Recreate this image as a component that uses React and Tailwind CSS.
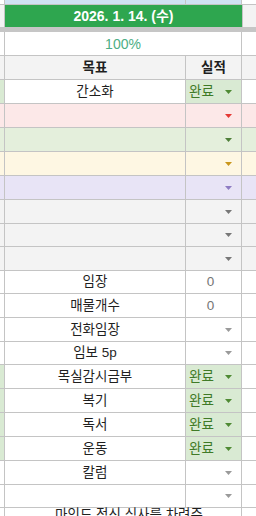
import React from 'react'

const LINE = '#c4c4c4'
const DONE_BG = '#d9ead3'
const GRAY = '#f3f3f3'

function Arrow({ color }) {
  return (
    <svg width="7" height="4" viewBox="0 0 7 4" className="flex-shrink-0">
      <path d="M0 0h7L3.5 4z" fill={color} />
    </svg>
  )
}

const rows = [
  { h: 24, a: DONE_BG, b: '#ffffff', c: DONE_BG, d: '#ffffff', label: '간소화', done: true, arrow: '#4f8a34' },
  { h: 24, all: '#fce8e8', arrow: '#e53935' },
  { h: 24, all: '#e4efdc', arrow: '#4f7f3a' },
  { h: 24, all: '#fef7e3', arrow: '#c9961c' },
  { h: 24, all: '#e8e4f6', arrow: '#8e7cc3' },
  { h: 24, all: GRAY, arrow: '#777777' },
  { h: 23, all: GRAY, arrow: '#777777' },
  { h: 24, all: GRAY, arrow: '#777777' },
  { h: 23, all: '#ffffff', label: '임장', value: '0' },
  { h: 24, all: '#ffffff', label: '매물개수', value: '0' },
  { h: 24, all: '#ffffff', label: '전화임장', arrow: '#9a9a9a' },
  { h: 23, all: '#ffffff', label: '임보 5p', arrow: '#9a9a9a' },
  { h: 24, a: DONE_BG, b: '#ffffff', c: DONE_BG, d: '#ffffff', label: '목실감시금부', done: true, arrow: '#4f8a34' },
  { h: 24, a: DONE_BG, b: '#ffffff', c: DONE_BG, d: '#ffffff', label: '복기', done: true, arrow: '#4f8a34' },
  { h: 24, a: DONE_BG, b: '#ffffff', c: DONE_BG, d: '#ffffff', label: '독서', done: true, arrow: '#4f8a34' },
  { h: 24, a: DONE_BG, b: '#ffffff', c: DONE_BG, d: '#ffffff', label: '운동', done: true, arrow: '#4f8a34' },
  { h: 24, all: '#ffffff', label: '칼럼', arrow: '#9a9a9a' },
  { h: 23, all: '#ffffff', arrow: '#9a9a9a' },
]

function Row({ r }) {
  const bg = k => ({ background: r.all || r[k] })
  return (
    <div className={`flex border-b border-[#c4c4c4] ${r.h === 23 ? 'h-[23px]' : 'h-[24px]'}`}>
      <div className="w-[5px] border-r border-[#c4c4c4]" style={bg('a')} />
      <div className="w-[181px] border-r border-[#c4c4c4] flex items-center justify-center text-[#1f1f1f]" style={bg('b')}>
        {r.label}
      </div>
      <div
        className={`w-[56px] border-r border-[#c4c4c4] flex items-center pl-[3px] pr-[9px] ${r.done ? 'justify-between' : r.value ? 'justify-center pr-[3px]' : 'justify-end'}`}
        style={bg('c')}
      >
        {r.done && <span className="text-[#3f7a27]">완료</span>}
        {r.value && <span className="text-[#757575]">{r.value}</span>}
        {r.arrow && <Arrow color={r.arrow} />}
      </div>
      <div className="flex-1" style={bg('d')} />
    </div>
  )
}

export default function App() {
  return (
    <div className="w-[256px] h-[516px] overflow-hidden bg-white text-[13.5px] leading-none font-['Liberation_Sans','Noto_Sans_CJK_KR',sans-serif]">
      {/* top sliver of the row above */}
      <div className="flex h-[5px] border-b border-[#c4c4c4]">
        <div className="w-[5px] border-r border-[#c4c4c4] bg-white" />
        <div className="w-[181px] border-r border-[#c4c4c4] bg-[#cfe2f3]" />
        <div className="w-[56px] border-r border-[#c4c4c4] bg-[#cfe2f3]" />
        <div className="flex-1 bg-white" />
      </div>

      {/* date header */}
      <div className="flex h-[22px]">
        <div className="w-[5px] border-r border-[#c4c4c4] bg-[#f3f3f3]" />
        <div className="w-[237px] bg-[#2ea64f] flex items-center justify-center text-white font-bold text-[14px]">
          2026. 1. 14. (수)
        </div>
        <div className="flex-1 border-l border-[#c4c4c4] bg-[#f3f3f3]" />
      </div>
      <div className="h-[5px] bg-[#c6c6c6]" />

      {/* progress */}
      <div className="flex h-[24px] border-b border-[#c4c4c4]">
        <div className="w-[5px] border-r border-[#c4c4c4] bg-white" />
        <div className="w-[237px] border-r border-[#c4c4c4] flex items-center justify-center text-[#4cae84] text-[14px]">
          100%
        </div>
        <div className="flex-1 bg-white" />
      </div>

      {/* column heads */}
      <div className="flex h-[24px] border-b border-[#c4c4c4] bg-[#f3f3f3] font-bold text-[#1f1f1f]">
        <div className="w-[5px] border-r border-[#c4c4c4]" />
        <div className="w-[181px] border-r border-[#c4c4c4] flex items-center justify-center">목표</div>
        <div className="w-[56px] border-r border-[#c4c4c4] flex items-center justify-center">실적</div>
        <div className="flex-1" />
      </div>

      {rows.map((r, i) => <Row key={i} r={r} />)}

      {/* overflowing last row */}
      <div className="relative flex h-[24px]">
        <div className="w-[5px] border-r border-[#c4c4c4]" />
        <div className="w-[237px] border-r border-[#c4c4c4]" />
        <div className="flex-1" />
        <span className="absolute left-0 w-[258px] top-[0px] text-center whitespace-nowrap text-[#1f1f1f]">
          마인드 정신 식사를 차려주
        </span>
      </div>
    </div>
  )
}
